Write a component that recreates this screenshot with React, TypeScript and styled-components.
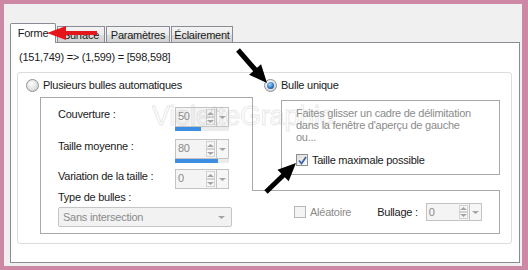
import * as React from 'react';
import styled, { createGlobalStyle, css } from 'styled-components';

const GlobalStyle = createGlobalStyle`
    body {
        margin: 0;
        background: #cd88a6;
        font-family: "Liberation Sans", Arial, sans-serif;
        font-size: 11px;
        letter-spacing: -0.25px;
        color: #1a1a1a;
    }
`;

const Window = styled.div`
    position: relative;
    width: 528px;
    height: 270px;
    box-sizing: border-box;
    border-style: solid;
    border-color: #cd88a6;
    border-width: 4px 6px 4px 4px;
    background: #f0f0f0;
    padding: 19px 2px 3px 6px;
    display: flex;
    flex-direction: column;
`;

const TabStrip = styled.div`
    display: flex;
    align-items: flex-end;
    height: 20px;
    margin-bottom: -1px;
    position: relative;
    z-index: 1;
`;

const Tab = styled.div<{ $active?: boolean; $w: number }>`
    box-sizing: border-box;
    width: ${(p) => p.$w}px;
    border: 1px solid #898c95;
    border-bottom: none;
    text-align: center;
    line-height: 14px;
    ${(p) =>
        p.$active
            ? css`
                  height: 20px;
                  padding-top: 2px;
                  background: #fff;
                  border-radius: 2px 2px 0 0;
              `
            : css`
                  height: 17px;
                  padding-top: 1px;
                  margin-left: 1px;
                  background: linear-gradient(#f3f3f3, #ebebeb 50%, #dddddd 51%, #d2d2d2);
                  border-bottom: 1px solid #898c95;
              `}
`;

const Panel = styled.div`
    position: relative;
    flex: 1;
    background: #fff;
    border: 1px solid #898c95;
    padding: 0 7px 0 6px;
`;

const Coords = styled.div`
    line-height: 14px;
    margin-top: 7px;
    padding-left: 2px;
`;

const GroupBox = styled.div`
    margin-top: 8px;
    height: 172px;
    box-sizing: border-box;
    border: 1px solid #dcdcdc;
    border-radius: 3px;
    padding: 5px 0 0 8px;
`;

const OptionRow = styled.div`
    display: flex;
    height: 14px;
    align-items: center;
`;

const Option = styled.label<{ $w?: number }>`
    display: flex;
    align-items: center;
    gap: 4px;
    line-height: 14px;
    ${(p) => p.$w && `width: ${p.$w}px;`}
`;

const Radio = styled.span<{ $on?: boolean }>`
    position: relative;
    flex: none;
    width: 13px;
    height: 13px;
    box-sizing: border-box;
    border-radius: 50%;
    border: 1px solid #8e8f8f;
    background: radial-gradient(circle at 40% 35%, #ffffff 0, #e2e2e2 55%, #c4c4c4 100%);
    ${(p) =>
        p.$on &&
        css`
            &::after {
                content: '';
                position: absolute;
                left: 2px;
                top: 2px;
                width: 7px;
                height: 7px;
                border-radius: 50%;
                background: radial-gradient(circle at 40% 35%, #a6dcff 0, #2f78c4 55%, #123f78 100%);
            }
        `}
`;

const Frame = styled.div`
    display: grid;
    grid-template-columns: 213px 247px;
    height: 137px;
    margin: 5px 0 0 14px;
`;

const LeftBox = styled.div`
    position: relative;
    box-sizing: border-box;
    height: 137px;
    border: 1px solid #a9a9a9;
    border-right: none;
    padding: 9px 0 0 17px;

    &::after {
        content: '';
        position: absolute;
        right: 0;
        top: -1px;
        width: 1px;
        height: 94px;
        background: #a9a9a9;
    }
`;

const FieldRow = styled.div<{ $gap: number }>`
    display: grid;
    grid-template-columns: 117px auto;
    margin-top: ${(p) => p.$gap}px;
`;

const Label = styled.div<{ $dim?: boolean }>`
    line-height: 14px;
    color: ${(p) => (p.$dim ? '#8b8b8b' : '#1a1a1a')};
`;

const Spin = styled.div<{ $w: number; $h: number }>`
    display: flex;
    width: ${(p) => p.$w}px;
    height: ${(p) => p.$h}px;
`;

const SpinField = styled.div`
    flex: 1;
    display: flex;
    box-sizing: border-box;
    border: 1px solid #c3c3c3;
    background: #f4f4f4;
    color: #8b8b8b;
    padding: 1px 1px 1px 2px;
    line-height: 14px;
`;

const SpinValue = styled.span`
    flex: 1;
`;

const Steppers = styled.div`
    display: flex;
    flex-direction: column;
    width: 9px;
`;

const Step = styled.div`
    flex: 1;
    display: flex;
    align-items: center;
    justify-content: center;
    border: 1px solid #d2d2d2;
    background: #f7f7f7;
`;

const DropBtn = styled.div`
    width: 12px;
    box-sizing: border-box;
    border: 1px solid #c3c3c3;
    border-left: none;
    background: #f6f6f6;
    display: flex;
    align-items: center;
    justify-content: center;
`;

const Bar = styled.div`
    width: 54px;
    height: 4px;
    background: #ececec;
`;

const BarFill = styled.div`
    height: 100%;
    background: #3d8de0;
`;

const Combo = styled.div`
    margin-top: 3px;
    width: 174px;
    height: 20px;
    box-sizing: border-box;
    border: 1px solid #c5c5c5;
    border-radius: 2px;
    background: #f2f2f2;
    color: #8b8b8b;
    display: flex;
    align-items: center;
    justify-content: space-between;
    padding: 0 6px 0 4px;
`;

const RightCol = styled.div`
    display: flex;
    flex-direction: column;
`;

const InfoBox = styled.div`
    margin: 3px 0 0 28px;
    height: 75px;
    box-sizing: border-box;
    border: 1px solid #a9a9a9;
    padding: 6px 8px 0 14px;
`;

const InfoText = styled.div`
    line-height: 12px;
    color: #8b8b8b;
`;

const CheckRow = styled.label<{ $gap?: number }>`
    display: flex;
    align-items: center;
    gap: 4px;
    margin-top: ${(p) => p.$gap || 0}px;
    line-height: 14px;
`;

const Box = styled.span<{ $dim?: boolean }>`
    flex: none;
    width: 12px;
    height: 12px;
    box-sizing: border-box;
    border: 1px solid ${(p) => (p.$dim ? '#b8b8b8' : '#8e8f8f')};
    background: ${(p) => (p.$dim ? '#f4f4f4' : 'linear-gradient(135deg, #dcdcdc, #fbfbfb)')};
    display: flex;
    align-items: center;
    justify-content: center;
`;

const BottomBox = styled.div`
    margin-top: auto;
    height: 44px;
    box-sizing: border-box;
    border: 1px solid #a9a9a9;
    border-left: none;
    display: flex;
    align-items: center;
    padding: 0 0 0 41px;
`;

const Spacer = styled.span<{ $w: number }>`
    width: ${(p) => p.$w}px;
    flex: none;
`;

// filigrane en surimpression, très pâle
const Watermark = styled.div`
    position: absolute;
    left: 141px;
    top: 58px;
    font-size: 27px;
    letter-spacing: -0.2px;
    color: transparent;
    -webkit-text-stroke: 1px rgba(170, 170, 170, 0.28);
    pointer-events: none;
`;

const Arrows = styled.svg`
    position: absolute;
    left: -4px;
    top: -4px;
    pointer-events: none;
    z-index: 3;
`;

function Tri({ up, size = 3 }: { up?: boolean; size?: number }): JSX.Element {
    return (
        <svg width={size * 2 + 1} height={size} viewBox="0 0 7 3">
            <path d={up ? 'M0 3 L3.5 0 L7 3Z' : 'M0 0 L3.5 3 L7 0Z'} fill="#a4a4a4" />
        </svg>
    );
}

function SpinBox({ value, w = 54, h = 20, fill }: { value: string; w?: number; h?: number; fill?: number }): JSX.Element {
    return (
        <div>
            <Spin $w={w} $h={h}>
                <SpinField>
                    <SpinValue>{value}</SpinValue>
                    <Steppers>
                        <Step>
                            <Tri up />
                        </Step>
                        <Step>
                            <Tri />
                        </Step>
                    </Steppers>
                </SpinField>
                <DropBtn>
                    <Tri />
                </DropBtn>
            </Spin>
            {fill !== undefined && (
                <Bar>
                    <BarFill style={{ width: `${fill}%` }} />
                </Bar>
            )}
        </div>
    );
}

function Check(): JSX.Element {
    return (
        <svg width="9" height="9" viewBox="0 0 9 9">
            <path d="M1 4.5 L3.5 7.5 L8 1" fill="none" stroke="#3d64a8" strokeWidth="1.8" />
        </svg>
    );
}

function App(): JSX.Element {
    return (
        <>
            <GlobalStyle />
            <Window>
                <TabStrip>
                    <Tab $active $w={46}>
                        Forme
                    </Tab>
                    <Tab $w={48}>Surface</Tab>
                    <Tab $w={64}>Paramètres</Tab>
                    <Tab $w={62}>Éclairement</Tab>
                </TabStrip>
                <Panel>
                    <Coords>(151,749) =&gt; (1,599) = [598,598]</Coords>
                    <GroupBox>
                        <OptionRow>
                            <Option $w={238}>
                                <Radio />
                                Plusieurs bulles automatiques
                            </Option>
                            <Option>
                                <Radio $on />
                                Bulle unique
                            </Option>
                        </OptionRow>
                        <Frame>
                            <LeftBox>
                                <FieldRow $gap={0}>
                                    <Label>Couverture :</Label>
                                    <SpinBox value="50" fill={48} />
                                </FieldRow>
                                <FieldRow $gap={8}>
                                    <Label>Taille moyenne :</Label>
                                    <SpinBox value="80" fill={80} />
                                </FieldRow>
                                <FieldRow $gap={6}>
                                    <Label>Variation de la taille :</Label>
                                    <SpinBox value="0" />
                                </FieldRow>
                                <Label style={{ marginTop: 1 }}>Type de bulles :</Label>
                                <Combo>
                                    Sans intersection
                                    <Tri size={3} />
                                </Combo>
                            </LeftBox>
                            <RightCol>
                                <InfoBox>
                                    <InfoText>
                                        Faites glisser un cadre de délimitation
                                        <br />
                                        dans la fenêtre d'aperçu de gauche
                                        <br />
                                        ou...
                                    </InfoText>
                                    <CheckRow $gap={10}>
                                        <Box>
                                            <Check />
                                        </Box>
                                        Taille maximale possible
                                    </CheckRow>
                                </InfoBox>
                                <BottomBox>
                                    <CheckRow>
                                        <Box $dim />
                                        <Label $dim>Aléatoire</Label>
                                    </CheckRow>
                                    <Spacer $w={26} />
                                    <Label>Bullage :</Label>
                                    <Spacer $w={8} />
                                    <SpinBox value="0" w={56} h={18} />
                                </BottomBox>
                            </RightCol>
                        </Frame>
                    </GroupBox>
                    <Watermark>VioletteGraphic</Watermark>
                </Panel>
                <Arrows width="528" height="270" viewBox="0 0 528 270">
                    <polygon points="47,33 66,26 66,31 97,31 97,35 66,35 66,40" fill="#e4161c" />
                    <polygon
                        points="267,83 261.1,64.2 257,67.85 239.9,48.35 236.1,51.65 253.2,71.15 249.1,74.8"
                        fill="#000"
                    />
                    <polygon
                        points="296,163 288.7,181.3 284.8,177.3 267.7,193.8 264.3,190.2 281.4,173.7 277.5,169.7"
                        fill="#000"
                    />
                </Arrows>
            </Window>
        </>
    );
}

export default App;
